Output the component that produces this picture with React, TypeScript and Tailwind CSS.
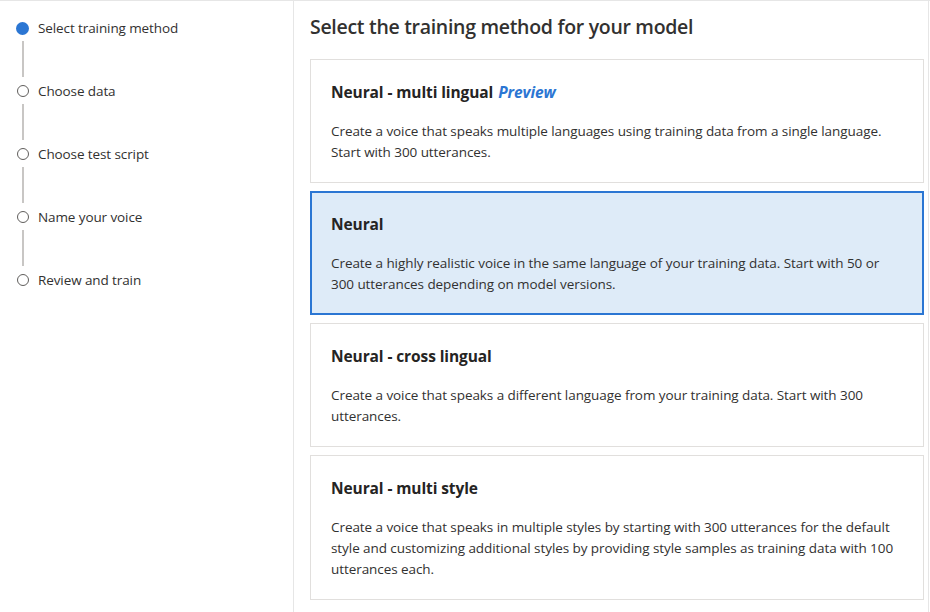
import React from "react";

const steps = [
  "Select training method",
  "Choose data",
  "Choose test script",
  "Name your voice",
  "Review and train",
];

type Card = {
  title: string;
  preview?: boolean;
  selected?: boolean;
  lines: string[];
};

const cards: Card[] = [
  {
    title: "Neural - multi lingual",
    preview: true,
    lines: [
      "Create a voice that speaks multiple languages using training data from a single language.",
      "Start with 300 utterances.",
    ],
  },
  {
    title: "Neural",
    selected: true,
    lines: [
      "Create a highly realistic voice in the same language of your training data. Start with 50 or",
      "300 utterances depending on model versions.",
    ],
  },
  {
    title: "Neural - cross lingual",
    lines: [
      "Create a voice that speaks a different language from your training data. Start with 300",
      "utterances.",
    ],
  },
  {
    title: "Neural - multi style",
    lines: [
      "Create a voice that speaks in multiple styles by starting with 300 utterances for the default",
      "style and customizing additional styles by providing style samples as training data with 100",
      "utterances each.",
    ],
  },
];

export default function App() {
  return (
    <div
      className="w-[930px] h-[612px] bg-white flex border-t border-[#e6e6e6] overflow-hidden text-[#323130]"
      style={{ fontFamily: '"Open Sans", "Noto Sans", "Liberation Sans", sans-serif' }}
    >
      {/* Left stepper */}
      <div className="w-[294px] shrink-0 border-r border-[#e6e6e6] pt-[16px] pl-[16px]">
        {steps.map((s, i) => (
          <div key={s}>
            <div className="flex items-center h-[22px]">
              <div className="w-[13px] flex justify-center">
                {i === 0 ? (
                  <div className="w-[13px] h-[13px] rounded-full bg-[#2b76d3]" />
                ) : (
                  <div className="w-[12px] h-[12px] rounded-full border-[1.5px] border-[#605e5c]" />
                )}
              </div>
              <span className="ml-[9px] text-[13.5px] tracking-[-0.1px] leading-[22px]">{s}</span>
            </div>
            {i < steps.length - 1 && (
              <div className="h-[41px] w-[13px] flex justify-center">
                <div className="w-[2px] h-[36px] mt-[2px] bg-[#c8c6c4]" />
              </div>
            )}
          </div>
        ))}
      </div>

      {/* Right content */}
      <div className="flex-1 pl-[16px] pr-[4px] border-r border-[#e6e6e6] mr-[1px]">
        <h1 className="mt-[12px] text-[19.5px] font-semibold leading-[28px] tracking-[-0.3px]">
          Select the training method for your model
        </h1>
        <div className="mt-[18px] flex flex-col gap-[8px]">
          {cards.map((c) => (
            <div
              key={c.title}
              className={
                c.selected
                  ? "border-2 border-[#2b76d3] bg-[#deebf8] px-[19px] pt-[20px] pb-[18px]"
                  : "border border-[#e1dfdd] bg-white px-[20px] pt-[21px] pb-[19px]"
              }
            >
              <div className="text-[15.5px] font-bold leading-[22px] tracking-[-0.1px] text-[#252423]">
                {c.title}
                {c.preview && (
                  <span className="ml-[5px] italic text-[#2b76d3]">Preview</span>
                )}
              </div>
              <div className="mt-[18px] text-[13.5px] leading-[21px] tracking-[-0.07px] whitespace-nowrap">
                {c.lines.map((l, i) => (
                  <div key={i}>{l}</div>
                ))}
              </div>
            </div>
          ))}
        </div>
      </div>
    </div>
  );
}
